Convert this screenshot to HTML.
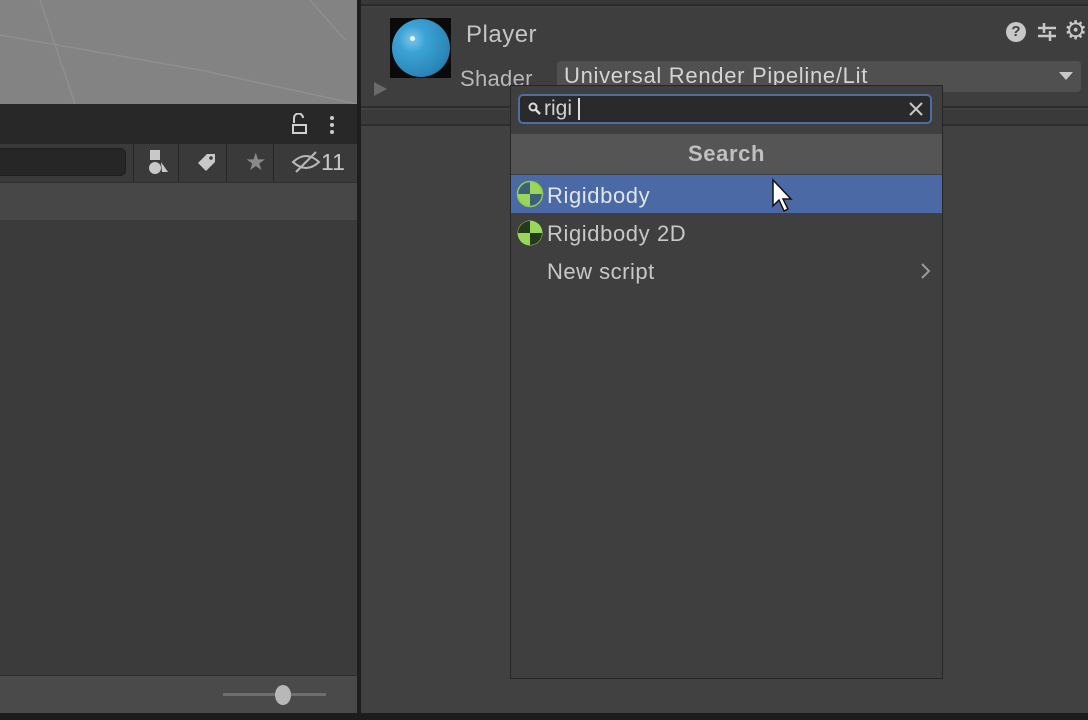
<!DOCTYPE html>
<html><head><meta charset="utf-8"><style>
*{margin:0;padding:0;box-sizing:border-box}
body{width:1088px;height:720px;overflow:hidden;background:#1c1c1c;font-family:"Liberation Sans",sans-serif;position:relative;color:#c8c8c8}
.a{position:absolute}
</style></head><body>
<div class="a" style="left:0;top:0;width:357px;height:104px;background:#838383;overflow:hidden">
<svg width="357" height="104" style="position:absolute;left:0;top:0"><path d="M40 0 L75 104 M0 35 L200 70 L357 104 M310 0 L345 40" stroke="#8f8f8f" stroke-width="1.5" fill="none"/></svg></div>
<div class="a" style="left:0;top:104px;width:357px;height:40px;background:#282828"></div>
<svg class="a" style="left:290px;top:113px" width="20" height="22"><path d="M4 10 V5 a4.5 4.5 0 0 1 9 0" stroke="#d0d0d0" stroke-width="2" fill="none"/><rect x="3" y="12" width="13" height="8" stroke="#d0d0d0" stroke-width="2" fill="none"/></svg>
<div class="a" style="left:330px;top:116px;width:4px;height:4px;border-radius:2px;background:#ccc;box-shadow:0 7px 0 #ccc,0 14px 0 #ccc"></div>
<div class="a" style="left:0;top:144px;width:357px;height:38px;background:#3a3a3a"></div>
<div class="a" style="left:-10px;top:148px;width:136px;height:28px;background:#262626;border-radius:6px;border:1px solid #1e1e1e"></div>
<div class="a" style="left:133px;top:144px;width:224px;height:38px;background:#3a3a3a;border-left:1px solid #262626"></div>
<div class="a" style="left:178px;top:144px;width:1px;height:38px;background:#262626"></div>
<div class="a" style="left:226px;top:144px;width:1px;height:38px;background:#262626"></div>
<div class="a" style="left:273px;top:144px;width:1px;height:38px;background:#262626"></div>
<svg class="a" style="left:146px;top:148px" width="30" height="30"><rect x="4" y="2" width="10" height="10" fill="#c8c8c8"/><circle cx="9" cy="20" r="6" fill="#c8c8c8"/><path d="M15 14 L22 24 L16 24 Z" fill="#c8c8c8"/></svg>
<svg class="a" style="left:194px;top:150px" width="28" height="26"><path d="M4 13 L13 4 L21 4 L21 12 L12 21 Z" fill="#c8c8c8"/><circle cx="17" cy="8" r="1.8" fill="#3a3a3a"/></svg>
<div class="a" style="left:245px;top:148px;font-size:24px;color:#8a8a8a">★</div>
<svg class="a" style="left:290px;top:150px" width="32" height="24"><path d="M3 12 Q16 0 29 12 Q16 24 3 12 Z" stroke="#b8b8b8" stroke-width="2" fill="none"/><path d="M6 22 L26 2" stroke="#b8b8b8" stroke-width="2"/></svg>
<div class="a" style="left:321px;top:149px;font-size:23px;color:#c8c8c8">11</div>
<div class="a" style="left:0;top:182px;width:357px;height:38px;background:#474747;border-top:1px solid #2e2e2e"></div>
<div class="a" style="left:0;top:220px;width:357px;height:455px;background:#3b3b3b"></div>
<div class="a" style="left:0;top:675px;width:357px;height:38px;background:#4a4a4a;border-top:1px solid #2e2e2e"></div>
<div class="a" style="left:223px;top:693px;width:103px;height:3px;background:#6e6e6e"></div>
<div class="a" style="left:275px;top:685px;width:16px;height:20px;border-radius:8px/10px;background:#b8b8b8"></div>
<div class="a" style="left:357px;top:0;width:4px;height:713px;background:#1e1e1e"></div>
<div class="a" style="left:361px;top:0;width:727px;height:713px;background:#414141"></div>
<div class="a" style="left:361px;top:0;width:727px;height:6px;background:#383838;border-bottom:2px solid #2a2a2a"></div>
<div class="a" style="left:361px;top:8px;width:727px;height:100px;background:#3e3e3e;border-bottom:2px solid #2d2d2d"></div>
<div class="a" style="left:361px;top:110px;width:727px;height:16px;background:#3a3a3a;border-bottom:2px solid #2d2d2d"></div>
<div class="a" style="left:390px;top:18px;width:61px;height:60px;background:#0a0a0a;overflow:hidden">
<div class="a" style="left:2px;top:1px;width:58px;height:58px;border-radius:50%;background:radial-gradient(circle at 35% 35%,#7cc6ea 0,#3ca3d6 25%,#2a86b8 70%,#1b5f85 100%)"></div>
<div class="a" style="left:20px;top:18px;width:5px;height:5px;border-radius:50%;background:#e8f6ff"></div></div>
<svg class="a" style="left:372px;top:80px" width="16" height="18"><path d="M2 2 L15 9 L2 16Z" fill="#6a6a6a"/></svg>
<div class="a" style="left:466px;top:21px;font-size:24px;letter-spacing:0.5px;color:#c4c4c4">Player</div>
<div class="a" style="left:460px;top:66px;font-size:22px;letter-spacing:0.3px;color:#b8b8b8">Shader</div>
<div class="a" style="left:557px;top:61px;width:524px;height:31px;background:#505050;border-radius:4px"></div>
<div class="a" style="left:564px;top:63px;font-size:22px;letter-spacing:0.7px;color:#d4d4d4">Universal Render Pipeline/Lit</div>
<svg class="a" style="left:1058px;top:70px" width="16" height="12"><path d="M1 2 H15 L8 10Z" fill="#c8c8c8"/></svg>
<div class="a" style="left:1006px;top:22px;width:20px;height:20px;border-radius:50%;background:#c8c8c8;color:#3e3e3e;font-weight:bold;font-size:15px;text-align:center;line-height:20px">?</div>
<svg class="a" style="left:1036px;top:20px" width="22" height="24"><path d="M2 8 H20 M2 16 H20 M8 3 V13 M14 11 V21" stroke="#c8c8c8" stroke-width="2.5"/></svg>
<div class="a" style="left:1064px;top:15px;font-size:26px;color:#c8c8c8">⚙</div>
<div class="a" style="left:510px;top:85px;width:433px;height:594px;background:#3f3f3f;border:1px solid #262626"></div>
<div class="a" style="left:518px;top:94px;width:414px;height:30px;background:#2a2a2a;border:2px solid #4a6ea8;border-radius:5px"></div>
<svg class="a" style="left:527px;top:101px" width="16" height="16"><circle cx="6" cy="6" r="3.5" stroke="#ddd" stroke-width="2" fill="none"/><path d="M8.5 8.5 L13 13" stroke="#ddd" stroke-width="2.5"/></svg>
<div class="a" style="left:544px;top:97px;font-size:21px;color:#d0d0d0">rigi</div>
<div class="a" style="left:578px;top:98px;width:2px;height:22px;background:#ddd"></div>
<svg class="a" style="left:909px;top:102px" width="14" height="14"><path d="M1 1 L13 13 M13 1 L1 13" stroke="#c8c8c8" stroke-width="2"/></svg>
<div class="a" style="left:511px;top:134px;width:431px;height:40px;background:#555555"></div>
<div class="a" style="left:511px;top:141px;width:431px;text-align:center;font-size:22px;letter-spacing:0.6px;color:#c0c0c0;font-weight:bold">Search</div>
<div class="a" style="left:511px;top:175px;width:431px;height:38px;background:#4a69a5"></div>
<svg class="a" style="left:516px;top:180px" width="28" height="28"><circle cx="14" cy="14" r="12.5" fill="#9ad65a"/><path d="M14 14 V2 A12 12 0 0 0 2 14Z M14 14 V26 A12 12 0 0 0 26 14Z" fill="#3d5f7a"/><circle cx="14" cy="14" r="12.5" stroke="#8fcc50" stroke-width="1.5" fill="none"/></svg>
<div class="a" style="left:547px;top:183px;font-size:22px;letter-spacing:0.6px;color:#e0e6f0">Rigidbody</div>
<svg class="a" style="left:516px;top:219px" width="28" height="28"><circle cx="14" cy="14" r="12.5" fill="#9ad65a"/><path d="M14 14 V2 A12 12 0 0 0 2 14Z M14 14 V26 A12 12 0 0 0 26 14Z" fill="#253a1a"/></svg>
<div class="a" style="left:547px;top:221px;font-size:22px;letter-spacing:0.6px;color:#c8c8c8">Rigidbody 2D</div>
<div class="a" style="left:547px;top:259px;font-size:22px;letter-spacing:0.5px;color:#c8c8c8">New script</div>
<svg class="a" style="left:920px;top:262px" width="12" height="18"><path d="M2 2 L9 9 L2 16" stroke="#9a9a9a" stroke-width="2" fill="none"/></svg>
<svg class="a" style="left:770px;top:178px" width="26" height="38"><path d="M3 2 L3 28 L9 22 L14 33 L18 31 L13 21 L21 21 Z" fill="#fff" stroke="#111" stroke-width="1.5"/></svg>
</body></html>
